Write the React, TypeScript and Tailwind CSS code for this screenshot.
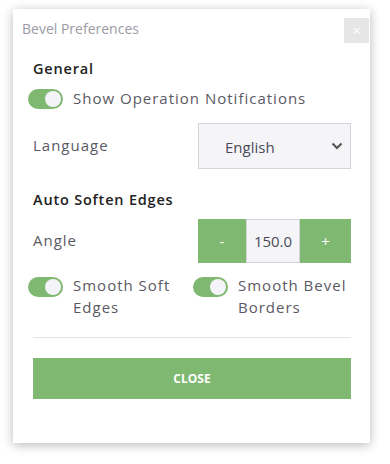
import React, { useState } from 'react';

const Toggle: React.FC<{ on: boolean; onChange: () => void }> = ({ on, onChange }) => (
    <button
        onClick={onChange}
        className={`relative flex-shrink-0 w-[35px] h-[20px] rounded-full ${on ? 'bg-[#7fb870]' : 'bg-[#cfcfd6]'}`}
    >
        <span className={`absolute top-[2px] w-[16px] h-[16px] rounded-full bg-[#f4f4f8] ${on ? 'left-[17px]' : 'left-[2px]'}`} />
    </button>
);

const App: React.FC = () => {
    const [notify, setNotify] = useState(true);
    const [softEdges, setSoftEdges] = useState(true);
    const [bevelBorders, setBevelBorders] = useState(true);
    const [angle, setAngle] = useState(150);

    return (
        <div className="w-[390px] h-[464px] bg-white pl-[13px] pt-[9px]" style={{ fontFamily: '"Open Sans", "Noto Sans", sans-serif' }}>
            <div className="w-[357px] h-[434px] bg-white shadow-[0_2px_10px_rgba(0,0,0,0.28)] flex flex-col">
                {/* Header */}
                <div className="flex items-start justify-between pl-[9px] pr-[1px] pt-[9px] h-[34px]">
                    <span className="text-[14px] leading-[22px] text-[#9c9ca6]">Bevel Preferences</span>
                    <button className="w-[25px] h-[25px] bg-[#e6e6e6] flex items-center justify-center text-white text-[15px] leading-none">×</button>
                </div>

                <div className="flex flex-col pl-[20px] pr-[19px]">
                    <h3 className="mt-[17px] text-[14.5px] leading-[18px] font-semibold tracking-[0.8px] text-[#222]">General</h3>

                    <div className="mt-[10px] -ml-[5px] flex items-center gap-[10px] h-[22px]">
                        <Toggle on={notify} onChange={() => setNotify(!notify)} />
                        <span className="text-[15px] leading-[22px] -mt-[2px] tracking-[1px] text-[#5a5a64]">Show Operation Notifications</span>
                    </div>

                    <div className="mt-[13px] flex items-center justify-between">
                        <span className="text-[15px] tracking-[1px] text-[#5a5a64] -mt-[1px]">Language</span>
                        <div className="w-[153px] h-[46px] border border-[#d4d4dc] bg-[#f5f5f8] flex items-center justify-between pl-[26px] pr-[7px]">
                            <span className="text-[15px] text-[#4a4a58] pt-[3px]">English</span>
                            <svg width="12" height="8" viewBox="0 0 12 8" fill="none" stroke="#555" strokeWidth="2.2">
                                <path d="M1.5 1.5 L6 6 L10.5 1.5" />
                            </svg>
                        </div>
                    </div>

                    <h3 className="mt-[22px] text-[14.5px] leading-[18px] font-semibold tracking-[0.8px] text-[#222]">Auto Soften Edges</h3>

                    <div className="mt-[10px] flex items-center justify-between">
                        <span className="text-[15px] tracking-[1px] text-[#5a5a64] -mt-[1px]">Angle</span>
                        <div className="flex h-[44px] w-[153px]">
                            <button onClick={() => setAngle(angle - 1)} className="w-[48px] bg-[#7fb870] text-white text-[14px]">-</button>
                            <div className="w-[54px] bg-[#f5f5f8] border border-[#d4d4dc] flex items-center justify-center text-[15px] text-[#4a4a58]">
                                {angle.toFixed(1)}
                            </div>
                            <button onClick={() => setAngle(angle + 1)} className="flex-1 bg-[#7fb870] text-white text-[15px]">+</button>
                        </div>
                    </div>

                    <div className="mt-[12px] -ml-[5px] flex">
                        <div className="w-[165px] flex items-start gap-[10px]">
                            <div className="mt-[2px]"><Toggle on={softEdges} onChange={() => setSoftEdges(!softEdges)} /></div>
                            <span className="text-[15px] leading-[22px] -mt-[1px] tracking-[1px] text-[#5a5a64]">Smooth Soft<br />Edges</span>
                        </div>
                        <div className="flex items-start gap-[10px]">
                            <div className="mt-[2px]"><Toggle on={bevelBorders} onChange={() => setBevelBorders(!bevelBorders)} /></div>
                            <span className="text-[15px] leading-[22px] -mt-[1px] tracking-[1px] text-[#5a5a64]">Smooth Bevel<br />Borders</span>
                        </div>
                    </div>

                    <div className="mt-[19px] h-px bg-[#e4e4e8]" />

                    <button className="mt-[20px] h-[41px] bg-[#7fb870] text-white text-[12px] font-bold">CLOSE</button>
                </div>
            </div>
        </div>
    );
};

export default App;
